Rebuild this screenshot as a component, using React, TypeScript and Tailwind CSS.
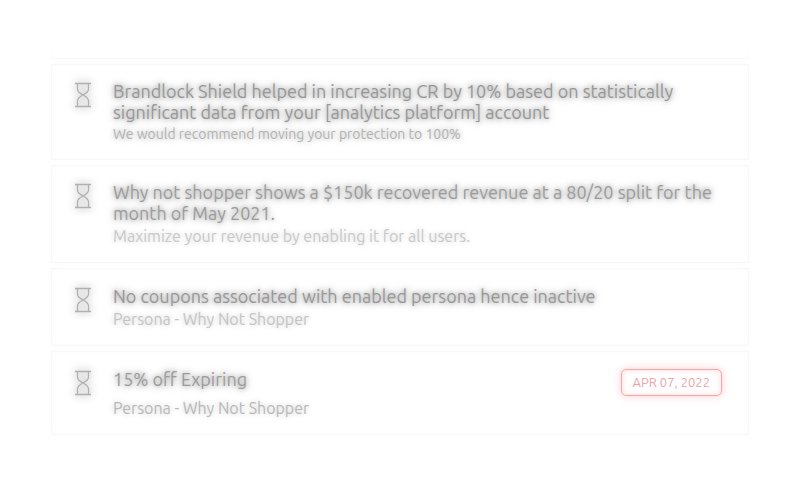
import React from "react";

type Notice = {
  title: string;
  detail: string;
  cardStyle: string;
  titleColor: string;
  detailStyle: string;
  date?: string;
};

const notices: Notice[] = [
  {
    title:
      "Brandlock Shield helped in increasing CR by 10% based on statistically significant data from your [analytics platform] account",
    detail: "We would recommend moving your protection to 100%",
    cardStyle: "pt-4",
    titleColor: "text-[#979797]",
    detailStyle:
      "text-[14px] leading-[22px] text-[#b2b2b2] [text-shadow:0_0_5px_#cccccc,0_0_8px_#c8c8c8]",
  },
  {
    title:
      "Why not shopper shows a $150k recovered revenue at a 80/20 split for the month of May 2021.",
    detail: "Maximize your revenue by enabling it for all users.",
    cardStyle: "pt-4",
    titleColor: "text-[#9c9c9c]",
    detailStyle:
      "text-[16px] leading-[24px] text-[#c8c8c8] [text-shadow:0_0_5px_#e4e4e4,0_0_8px_#e0e0e0]",
  },
  {
    title: "No coupons associated with enabled persona hence inactive",
    detail: "Persona - Why Not Shopper",
    cardStyle: "pt-[17px]",
    titleColor: "text-[#979797]",
    detailStyle:
      "text-[16px] leading-[24px] text-[#c4c4c4] [text-shadow:0_0_5px_#dedede,0_0_8px_#dcdcdc]",
  },
  {
    title: "15% off Expiring",
    detail: "Persona - Why Not Shopper",
    cardStyle: "pt-[17px]",
    titleColor: "text-[#9c9c9c]",
    detailStyle:
      "mt-[6px] text-[16px] leading-[24px] text-[#b8b8b8] [text-shadow:0_0_5px_#dedede,0_0_8px_#dcdcdc]",
    date: "APR 07, 2022",
  },
];

function Hourglass() {
  return (
    <svg
      width="18"
      height="26"
      viewBox="0 0 18 26"
      fill="none"
      stroke="#b0b0b0"
      aria-hidden="true"
      className="mt-px shrink-0 drop-shadow-[0_0_4px_#8c8c8c]"
    >
      <path d="M1 1.500h16M1 24.500h16" strokeWidth="1.300" />
      <path
        d="M3.500 2v5c0 3 2.500 4.500 5.500 6c3-1.500 5.500-3 5.500-6V2M3.500 24v-5c0-3 2.500-4.500 5.500-6c3 1.500 5.500 3 5.500 6v5"
        strokeWidth="1.300"
      />
    </svg>
  );
}

function NoticeCard({ notice }: { notice: Notice }) {
  return (
    <li
      className={`flex items-start border border-[#f8f8f8] bg-white pr-[26px] pb-[14px] pl-[22px] shadow-[0_0_6px_#fcfcfc,inset_0_0_6px_#fcfcfc] ${notice.cardStyle}`}
    >
      <Hourglass />
      <div className="ml-[21px] min-w-0 flex-1">
        <h2
          className={`text-[18px] leading-[21px] font-normal [text-shadow:0_0_4px_#b4b4b4,0_0_8px_#9c9c9c] ${notice.titleColor}`}
        >
          {notice.title}
        </h2>
        <p className={notice.detailStyle}>{notice.detail}</p>
      </div>
      {notice.date && (
        <time
          dateTime="2022-04-07"
          className="rounded-[5px] border border-[#f4a6aa] bg-white px-[11px] text-[13px] leading-[25px] whitespace-nowrap text-[#eaa5a9] shadow-[0_0_8px_#fbccce,inset_0_0_6px_#fbdcdd]"
        >
          {notice.date}
        </time>
      )}
    </li>
  );
}

export default function App() {
  return (
    <main className="min-h-screen bg-white px-[51px] pt-[53px] font-['Ubuntu','Noto_Sans',sans-serif]">
      <div className="mb-[5px] h-[6px] border-x border-b border-[#f8f8f8]" />
      <ul className="flex flex-col gap-[5px]">
        {notices.map((notice) => (
          <NoticeCard key={notice.title} notice={notice} />
        ))}
      </ul>
    </main>
  );
}
